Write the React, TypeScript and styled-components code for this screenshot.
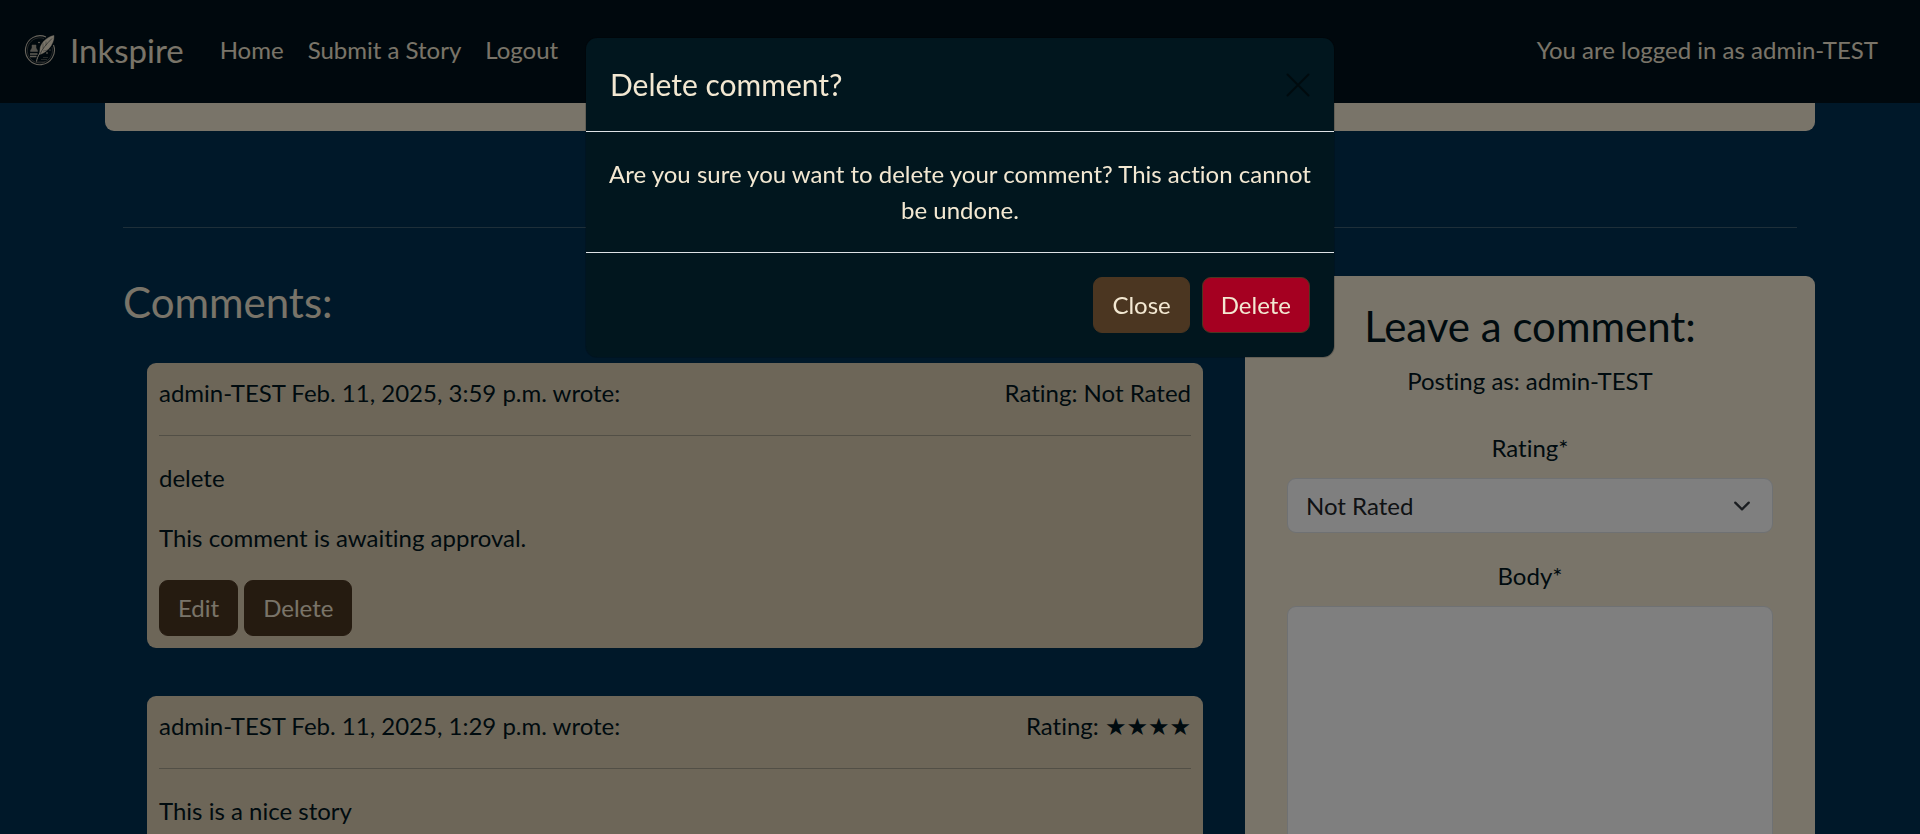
import React from "react";
import styled, { createGlobalStyle } from "styled-components";

const color = {
  ink: "#01161e",
  navbar: "#01101a",
  page: "#003153",
  cream: "#f3e8d2",
  parchment: "#dbccb1",
  brown: "#4b3621",
  red: "#a50021",
  line: "#dee2e6",
};

const GlobalStyle = createGlobalStyle`
  *, *::before, *::after { box-sizing: border-box; }
  html, body { height: 100%; }
  body {
    margin: 0;
    overflow: hidden;
    background: ${color.page};
    color: ${color.ink};
    font: 400 24px/36px Lato, "DejaVu Sans", sans-serif;
    font-variant-ligatures: none;
  }
  h1, h2, p { margin: 0; font-weight: 400; }
  button, select, textarea { font: inherit; }
`;

const Navbar = styled.header`
  position: fixed;
  inset: 0 0 auto;
  z-index: 1;
  display: flex;
  align-items: center;
  min-height: 103px;
  padding: 0 42px 4px 24px;
  background: ${color.navbar};
  color: ${color.cream};
`;

const Brand = styled.a`
  display: flex;
  align-items: center;
  gap: 14px;
  margin-right: 24px;
  color: inherit;
  font-size: 33px;
  line-height: 48px;
  text-decoration: none;
`;

const NavLinks = styled.nav`
  display: flex;
  flex: 1;
`;

const NavLink = styled.a`
  padding: 0 12px;
  color: inherit;
  text-decoration: none;
`;

const Page = styled.main`
  max-width: 1710px;
  margin: 0 auto;
`;

const StoryCard = styled.section`
  height: 131px;
  border-radius: 9px;
  background: ${color.cream};
`;

const Rule = styled.hr`
  margin: 24px 0;
  border: 0;
  border-top: 1px solid currentColor;
  color: inherit;
  opacity: 0.25;
`;

const SectionRule = styled(Rule)`
  margin: 96px 18px 48px;
  color: ${color.cream};
`;

const Columns = styled.div`
  display: grid;
  grid-template-columns: 2fr 1fr;
  align-items: start;
`;

const Comments = styled.section`
  padding: 0 18px;
`;

const Heading = styled.h2`
  margin-bottom: 10px;
  color: inherit;
  font-size: 42px;
  line-height: 53px;
`;

const CommentsHeading = styled(Heading)`
  color: ${color.cream};
`;

const CommentList = styled.div`
  display: grid;
  gap: 48px;
  padding: 24px;
`;

const CommentCard = styled.article`
  padding: 12px;
  border-radius: 9px;
  background: ${color.parchment};
`;

const CommentMeta = styled.div`
  display: flex;
  justify-content: space-between;
`;

const CommentText = styled.p`
  margin-bottom: 24px;
`;

const Actions = styled.div`
  display: flex;
  gap: 6px;
`;

const Button = styled.button<{ $danger?: boolean }>`
  padding: 9px 18px;
  border: 1px solid ${color.brown};
  border-radius: 9px;
  background: ${({ $danger }) => ($danger ? color.red : color.brown)};
  color: ${color.cream};
  cursor: pointer;
`;

const FormCard = styled.section`
  padding: 24px 42px;
  border-radius: 9px;
  background: ${color.cream};
  text-align: center;
`;

const Form = styled.form`
  display: grid;
  gap: 25px;
  margin-top: 31px;
`;

const Field = styled.div`
  display: grid;
  gap: 12px;
`;

const SelectWrap = styled.div`
  display: grid;
  align-items: center;

  > * { grid-area: 1 / 1; }
  > svg {
    justify-self: end;
    margin-right: 22px;
    pointer-events: none;
  }
`;

const Select = styled.select`
  appearance: none;
  height: 55px;
  padding: 0 18px;
  border: 1px solid ${color.line};
  border-radius: 9px;
  background: #fff;
  color: #212529;
`;

const TextArea = styled.textarea`
  height: 380px;
  padding: 9px 18px;
  border: 1px solid ${color.line};
  border-radius: 9px;
  background: #fff;
  resize: none;
`;

const Backdrop = styled.div`
  position: fixed;
  inset: 0;
  z-index: 2;
  display: flex;
  align-items: flex-start;
  justify-content: center;
  padding-top: 37px;
  background: rgba(0, 0, 0, 0.5);
`;

const Dialog = styled.div`
  width: 100%;
  max-width: 750px;
  border: 1px solid rgba(0, 0, 0, 0.18);
  border-radius: 12px;
  background: ${color.ink};
  background-clip: padding-box;
  color: ${color.cream};
`;

const DialogHeader = styled.div`
  display: flex;
  align-items: center;
  justify-content: space-between;
  padding: 24px;
  border-bottom: 1px solid ${color.line};
`;

const DialogTitle = styled.h1`
  font-size: 30px;
  line-height: 45px;
`;

const DialogBody = styled.p`
  padding: 24px 18px;
  text-align: center;
`;

const DialogFooter = styled.div`
  display: flex;
  justify-content: flex-end;
  gap: 12px;
  padding: 24px;
  border-top: 1px solid ${color.line};
`;

const CloseButton = styled.button`
  display: flex;
  padding: 0;
  border: 0;
  background: none;
  color: #000;
  opacity: 0.5;
  cursor: pointer;
`;

function Logo() {
  return (
    <svg width="32" height="32" viewBox="0 0 32 32" fill="none" stroke="currentColor" aria-hidden="true">
      <path d="M22 3A14.500 14.500 0 1 0 29.500 11" strokeWidth="1.100" opacity=".85" />
      <path d="M20 4.500A12.600 12.600 0 1 0 28 13" strokeWidth=".4" opacity=".7" />
      <path d="M30 1.500C24 2.500 18 7.500 16.200 13.500L15.500 20.500C21 19.500 30.500 11.500 30 1.500Z" fill="currentColor" strokeWidth=".4" />
      <path d="M28 4.500C22 10.500 18.500 14.500 15.500 21" stroke={color.navbar} strokeWidth=".5" />
      <path d="M19 9.500v5M22 7.500v4M19 17l5-1" stroke={color.navbar} strokeWidth=".3" />
      <path d="M16 19C14 22 13 24.500 12.500 27.500" strokeWidth="1" />
      <path d="M8 11h4v3l1.500 2.500v1h-7v-1L8 14z" fill="currentColor" strokeWidth=".5" opacity=".7" />
      <path d="M6 20h7.500M6 22.500h6.500" strokeWidth="1.300" opacity=".8" />
      <path d="M17 25.500h6M12 28h9M19 23.500h5" strokeWidth=".5" opacity=".6" />
      <circle cx="15" cy="8.500" r=".8" fill="currentColor" stroke="none" />
      <circle cx="23" cy="19" r=".8" fill="currentColor" stroke="none" />
      <circle cx="26" cy="16" r=".6" fill="currentColor" stroke="none" />
    </svg>
  );
}

export default function App() {
  return (
    <>
      <GlobalStyle />
      <Navbar>
        <Brand href="#">
          <Logo />
          Inkspire
        </Brand>
        <NavLinks>
          <NavLink href="#">Home</NavLink>
          <NavLink href="#">Submit a Story</NavLink>
          <NavLink href="#">Logout</NavLink>
        </NavLinks>
        <span>You are logged in as admin-TEST</span>
      </Navbar>

      <Page>
        <StoryCard />
        <SectionRule />
        <Columns>
          <Comments>
            <CommentsHeading>Comments:</CommentsHeading>
            <CommentList>
              <CommentCard>
                <CommentMeta>
                  <span>admin-TEST Feb. 11, 2025, 3:59 p.m. wrote:</span>
                  <span>Rating: Not Rated</span>
                </CommentMeta>
                <Rule />
                <CommentText>delete</CommentText>
                <CommentText>This comment is awaiting approval.</CommentText>
                <Actions>
                  <Button type="button">Edit</Button>
                  <Button type="button">Delete</Button>
                </Actions>
              </CommentCard>
              <CommentCard>
                <CommentMeta>
                  <span>admin-TEST Feb. 11, 2025, 1:29 p.m. wrote:</span>
                  <span>Rating: ★★★★</span>
                </CommentMeta>
                <Rule />
                <CommentText>This is a nice story</CommentText>
              </CommentCard>
            </CommentList>
          </Comments>

          <FormCard>
            <Heading>Leave a comment:</Heading>
            <p>Posting as: admin-TEST</p>
            <Form>
              <Field>
                <label htmlFor="rating">Rating*</label>
                <SelectWrap>
                  <Select id="rating" defaultValue="0">
                    <option value="0">Not Rated</option>
                    <option value="4">★★★★</option>
                  </Select>
                  <svg width="18" height="18" viewBox="0 0 16 16" fill="none" stroke="#343a40" strokeWidth="2" strokeLinecap="round" strokeLinejoin="round" aria-hidden="true">
                    <path d="m2 5 6 6 6-6" />
                  </svg>
                </SelectWrap>
              </Field>
              <Field>
                <label htmlFor="body">Body*</label>
                <TextArea id="body" />
              </Field>
            </Form>
          </FormCard>
        </Columns>
      </Page>

      <Backdrop>
        <Dialog role="dialog" aria-modal="true" aria-labelledby="dialog-title">
          <DialogHeader>
            <DialogTitle id="dialog-title">Delete comment?</DialogTitle>
            <CloseButton type="button" aria-label="Close">
              <svg width="24" height="24" viewBox="0 0 16 16" fill="none" stroke="currentColor" strokeWidth="1.400" strokeLinecap="round" aria-hidden="true">
                <path d="M1 1l14 14M15 1L1 15" />
              </svg>
            </CloseButton>
          </DialogHeader>
          <DialogBody>
            Are you sure you want to delete your comment? This action cannot be undone.
          </DialogBody>
          <DialogFooter>
            <Button type="button">Close</Button>
            <Button type="button" $danger>Delete</Button>
          </DialogFooter>
        </Dialog>
      </Backdrop>
    </>
  );
}
